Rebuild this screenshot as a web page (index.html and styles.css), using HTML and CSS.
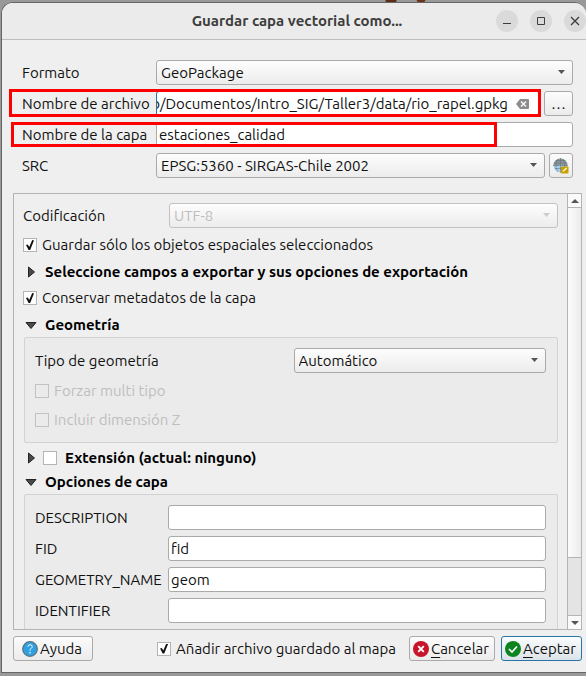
FILE: index.html
```html
<!DOCTYPE html>
<html lang="es">
<head>
<meta charset="utf-8">
<title>Guardar capa vectorial como...</title>
<link rel="stylesheet" href="styles.css">
</head>
<body>
<main class="window">
  <header class="titlebar">
    <h1 class="title">Guardar capa vectorial como...</h1>
    <div class="window-controls">
      <button class="round" type="button" aria-label="Minimizar"><svg width="22" height="22" viewBox="0 0 22 22"><path d="M7 13.5h8" stroke="#3d3d3d" fill="none"/></svg></button>
      <button class="round" type="button" aria-label="Maximizar"><svg width="22" height="22" viewBox="0 0 22 22"><path d="M7.500 7.500h7v7h-7z" stroke="#3d3d3d" fill="none"/></svg></button>
      <button class="round" type="button" aria-label="Cerrar"><svg width="22" height="22" viewBox="0 0 22 22"><path d="M7 7l8 8M15 7l-8 8" stroke="#3d3d3d" stroke-width="1.3" fill="none"/></svg></button>
    </div>
  </header>

  <form class="dialog">
    <section class="file-form">
      <div class="row">
        <label for="format">Formato</label>
        <span class="select"><select id="format"><option>GeoPackage</option></select></span>
      </div>
      <div class="row marked">
        <label for="filename">Nombre de archivo</label>
        <span class="path-field">
          <input id="filename" type="text" value="o/Documentos/Intro_SIG/Taller3/data/rio_rapel.gpkg">
          <button class="clear" type="button" aria-label="Borrar"><svg width="13" height="10" viewBox="0 0 13 10"><path d="M4 0h8q1 0 1 1v8q0 1-1 1H4L0 5z" fill="#8c8c8c"/><path d="M5 2.500l5 5M10 2.500l-5 5" stroke="#fff" stroke-width="1.300"/></svg></button>
        </span>
        <button class="push browse" type="button">…</button>
        <span class="mark mark-file"></span>
      </div>
      <div class="row marked">
        <label for="layer">Nombre de la capa</label>
        <input class="field" id="layer" type="text" value="estaciones_calidad">
        <span class="mark mark-layer"></span>
      </div>
      <div class="row">
        <label for="crs">SRC</label>
        <span class="select"><select id="crs"><option>EPSG:5360 - SIRGAS-Chile 2002</option></select></span>
        <button class="push crs-button" type="button" aria-label="Seleccionar SRC">
          <svg width="16" height="16" viewBox="0 0 16 16">
            <circle cx="7.500" cy="7.500" r="7" fill="#a9cdec"/>
            <path d="M.5 7.500a7 7 0 0 1 14 0z" fill="#8d979b"/>
            <path d="M1 5h13M0 7.500h15M2 10.500h11M7.500 0v15M4.500 1.500q-3 6 0 12M10.500 1.500q3 6 0 12M3 2.500h9" stroke="#596d78" stroke-width=".7" fill="none" stroke-dasharray="1.500 .7"/>
            <rect x="8" y="8.500" width="7.500" height="7" rx="1" fill="#c8a000"/>
            <path d="M9.500 14l.6-1.800 3-2.600 1 1-3 2.700z" fill="#fff8cf"/>
          </svg>
        </button>
      </div>
    </section>

    <section class="scroll-area">
      <div class="content">
        <div class="row encoding">
          <label for="encoding">Codificación</label>
          <span class="select off"><select id="encoding" disabled><option>UTF-8</option></select></span>
        </div>
        <label class="check first-check"><input type="checkbox" checked>Guardar sólo los objetos espaciales seleccionados</label>
        <h2 class="group-title"><button class="fold" type="button" aria-label="Expandir campos"><svg width="12" height="12" viewBox="0 0 12 12"><path d="M3.500 1v10l6-5z" fill="#4a4a4a" stroke="#222"/></svg></button>Seleccione campos a exportar y sus opciones de exportación</h2>
        <label class="check"><input type="checkbox" checked>Conservar metadatos de la capa</label>
        <h2 class="group-title"><button class="fold" type="button" aria-label="Contraer geometría"><svg width="12" height="12" viewBox="0 0 12 12"><path d="M1 3.500h10l-5 6z" fill="#4a4a4a" stroke="#222"/></svg></button>Geometría</h2>
        <div class="group geometry">
          <div class="row">
            <label for="geometry">Tipo de geometría</label>
            <span class="select"><select id="geometry"><option>Automático</option></select></span>
          </div>
          <label class="check off"><input type="checkbox" disabled>Forzar multi tipo</label>
          <label class="check off"><input type="checkbox" disabled>Incluir dimensión Z</label>
        </div>
        <h2 class="group-title extent"><button class="fold" type="button" aria-label="Expandir extensión"><svg width="12" height="12" viewBox="0 0 12 12"><path d="M3.500 1v10l6-5z" fill="#4a4a4a" stroke="#222"/></svg></button><label class="check"><input type="checkbox">Extensión (actual: ninguno)</label></h2>
        <h2 class="group-title options"><button class="fold" type="button" aria-label="Contraer opciones"><svg width="12" height="12" viewBox="0 0 12 12"><path d="M1 3.500h10l-5 6z" fill="#4a4a4a" stroke="#222"/></svg></button>Opciones de capa</h2>
        <div class="group layer-options">
          <div class="row"><label for="description">DESCRIPTION</label><input class="field" id="description" type="text"></div>
          <div class="row"><label for="fid">FID</label><input class="field" id="fid" type="text" value="fid"></div>
          <div class="row"><label for="geom">GEOMETRY_NAME</label><input class="field" id="geom" type="text" value="geom"></div>
          <div class="row"><label for="identifier">IDENTIFIER</label><input class="field" id="identifier" type="text"></div>
        </div>
      </div>
      <div class="scrollbar">
        <button class="step" type="button" aria-label="Subir"><svg width="8" height="4" viewBox="0 0 8 4"><path d="M0 4l4-4 4 4z" fill="#555"/></svg></button>
        <div class="track"><div class="thumb"></div></div>
        <button class="step" type="button" aria-label="Bajar"><svg width="8" height="4" viewBox="0 0 8 4"><path d="M0 0l4 4 4-4z" fill="#555"/></svg></button>
      </div>
    </section>

    <footer class="actions">
      <button class="push help" type="button"><svg width="16" height="16" viewBox="0 0 16 16"><circle cx="8" cy="8" r="7.300" fill="#30a0e0" stroke="#55717f" stroke-width="1.200"/><path d="M5.800 5.700q.3-2 2.300-2 2.100 0 2.100 1.900 0 1-1.100 1.800T8 9.700" stroke="#fff" fill="none"/><path d="M8 11v1.500" stroke="#fff" stroke-width="1.200"/></svg>Ayuda</button>
      <label class="check add"><input type="checkbox" checked>Añadir archivo guardado al mapa</label>
      <button class="push" type="button"><svg width="16" height="16" viewBox="0 0 16 16"><circle cx="8" cy="8" r="8" fill="#c7162b"/><path d="M5.200 5.200l5.600 5.600M10.800 5.200l-5.600 5.600" stroke="#fff" stroke-width="1.900"/></svg><span><u>C</u>ancelar</span></button>
      <button class="push default" type="submit"><svg width="16" height="16" viewBox="0 0 16 16"><circle cx="8" cy="8" r="8" fill="#0e8420"/><path d="M4 8l3 3 5-5.500" stroke="#fff" stroke-width="1.700" fill="none"/></svg><span><u>A</u>ceptar</span></button>
    </footer>
  </form>
</main>
</body>
</html>
```
FILE: styles.css
```css
* { box-sizing: border-box; }

body {
  margin: 0;
  height: 100vh;
  padding: 2px 0 3px 1px;
  overflow: hidden;
  background:
    radial-gradient(circle at 391px 0, #5b2f17 5px, transparent 6px),
    radial-gradient(circle at 421px -1px, #6b3518 4px, transparent 5px),
    #999;
  color: #111;
  font: 15px/18px Ubuntu, "Noto Sans", sans-serif;
}

button, input, select { font: inherit; color: inherit; }
button { padding: 0; }
svg { display: block; flex: none; }

.window {
  display: flex;
  flex-direction: column;
  height: 100%;
  border: 1px solid #666;
  border-right: 0;
  border-radius: 12px 12px 0 0;
  background: #efefef;
  overflow: hidden;
}

.titlebar {
  display: grid;
  grid-template-columns: 1fr auto 1fr;
  align-items: center;
  flex: none;
  height: 37px;
  padding-left: 6px;
  border-bottom: 1px solid #bdbdbd;
  background: #ebebeb;
}

.title {
  grid-column: 2;
  margin: 0;
  color: #3d3d3d;
  font-size: 15px;
  font-weight: 700;
}

.window-controls { display: flex; justify-content: flex-end; gap: 12px; }
.round { width: 22px; height: 22px; border: 0; border-radius: 50%; background: #dadada; }

.dialog {
  display: flex;
  flex-direction: column;
  flex: 1;
  min-height: 0;
  padding: 20px 4px 11px 11px;
}

.file-form {
  display: grid;
  gap: 6px;
  padding: 0 9px 0 9px;
}

.row { display: flex; align-items: center; gap: 4px; height: 25px; }
.file-form label { flex: none; width: 130px; white-space: nowrap; }
.marked { position: relative; }

.select { position: relative; display: flex; flex: 1; height: 25px; min-width: 0; }

.select::after {
  content: "";
  position: absolute;
  top: 10px;
  right: 8px;
  width: 7px;
  height: 4px;
  background: #555;
  clip-path: polygon(0 0, 100% 0, 50% 100%);
  pointer-events: none;
}

select {
  appearance: none;
  width: 100%;
  padding: 0 4px;
  border: 1px solid #aaa;
  border-radius: 3px;
  background: linear-gradient(#fdfdfd, #ececec);
}

.select.off select { border-color: #c2c2c2; color: #bebebe; opacity: 1; }
.select.off::after { background: #ccc; }

.field, .path-field {
  flex: 1;
  min-width: 0;
  height: 25px;
  padding: 0 2px;
  border: 1px solid #aaa;
  border-radius: 3px;
  background: #fff;
}

.path-field {
  display: flex;
  align-items: center;
  padding: 0 10px 0 0;
  border-color: #2874a6;
}

.path-field input {
  flex: 1;
  min-width: 0;
  padding: 0;
  border: 0;
  background: transparent;
  direction: rtl;
}

.clear { margin-left: 8px; border: 0; background: transparent; }

.push {
  display: flex;
  align-items: center;
  justify-content: center;
  gap: 2px;
  height: 25px;
  border: 1px solid #aaa;
  border-radius: 3px;
  background: linear-gradient(#fcfcfc, #ebebeb);
}

.browse { width: 29px; }
.crs-button { width: 24px; }

.mark { position: absolute; border: 3px solid #f00; pointer-events: none; }
.mark-file { inset: -2px 32px -1px -13px; }
.mark-layer { inset: 0 76px 0 -11px; }

.scroll-area {
  display: flex;
  flex: 1;
  min-height: 0;
  margin-top: 15px;
  border: 1px solid #b4b4b4;
  overflow: hidden;
}

.content { flex: 1; min-width: 0; padding: 9px 9px 0 9px; }
.encoding label { flex: none; width: 142px; }

.check { display: flex; align-items: center; gap: 5px; height: 18px; white-space: nowrap; }

.check input {
  appearance: none;
  display: grid;
  place-items: center;
  flex: none;
  width: 14px;
  height: 14px;
  margin: 0;
  border: 1px solid #b4b4b4;
  background: #fff;
}

.check input:checked::after {
  content: "";
  width: 8px;
  height: 10px;
  background: #111;
  clip-path: polygon(0 50%, 22% 44%, 40% 70%, 78% 0, 100% 4%, 52% 100%, 32% 100%);
}

.check.off { color: #bebebe; }
.check.off input { border-color: #c2c2c2; background: transparent; }

.first-check { margin-top: 8px; }

.group-title {
  display: flex;
  align-items: center;
  gap: 8px;
  height: 18px;
  margin: 9px 0 8px 2px;
  color: #000;
  font-size: 15px;
  font-weight: 700;
  white-space: nowrap;
}

.fold { width: 12px; height: 12px; border: 0; background: transparent; }

.group {
  margin: -5px 0 0 1px;
  padding: 10px 11px 0 10px;
  border: 1px solid #d2d2d2;
  border-radius: 2px;
  background: #ebebeb;
}

.geometry { display: grid; gap: 10px; padding-bottom: 13px; }
.geometry .row label, .geometry .row .select { flex: 1; }
.geometry .row { gap: 6px; margin-bottom: -2px; }
.geometry .check { height: 19px; }

.extent { margin: 6px 0 6px 2px; gap: 6px; }
.extent .check { gap: 8px; }
.options { margin: 6px 0 8px 2px; }

.layer-options { display: grid; gap: 6px; padding-bottom: 20px; }
.layer-options label { flex: none; width: 129px; }

.scrollbar {
  display: flex;
  flex-direction: column;
  flex: none;
  width: 14px;
  border-left: 1px solid #b4b4b4;
  background: #e4e4e4;
}

.step {
  display: grid;
  place-items: center;
  height: 13px;
  border: 0;
  background: #fafafa;
}

.track { flex: 1; border: solid #b4b4b4; border-width: 1px 0; }
.thumb { height: 86%; border-bottom: 1px solid #b4b4b4; background: linear-gradient(90deg, #fcfcfc, #ececec); }

.actions { display: flex; align-items: center; flex: none; gap: 6px; margin-top: 6px; }
.actions .push { padding: 0 5px 0 3px; }
.actions .help { width: 80px; }
.actions .add { margin-left: auto; margin-right: 7px; }
.actions .default { border-color: #2874a6; background: linear-gradient(#fafcfd, #dce3e8); }
.actions u { text-underline-offset: 3px; }
```
